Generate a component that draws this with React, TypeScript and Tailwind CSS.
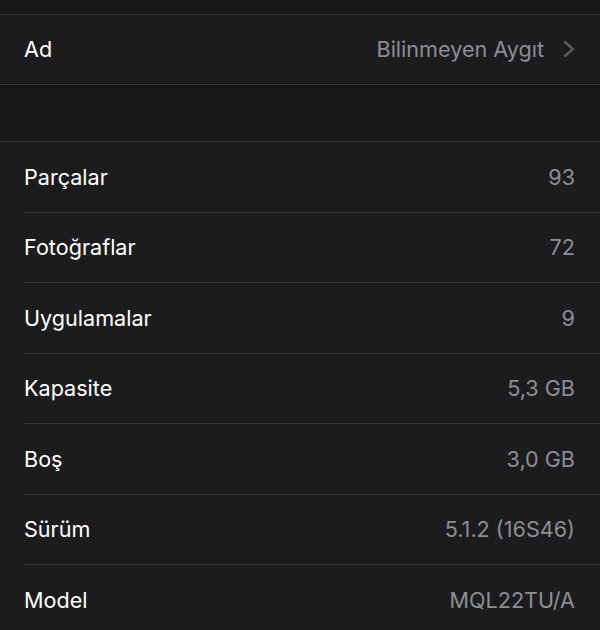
const rows: [string, string][] = [
  ["Parçalar", "93"],
  ["Fotoğraflar", "72"],
  ["Uygulamalar", "9"],
  ["Kapasite", "5,3 GB"],
  ["Boş", "3,0 GB"],
  ["Sürüm", "5.1.2 (16S46)"],
  ["Model", "MQL22TU/A"],
];

export default function App() {
  return (
    <div
      className="h-[630px] w-[600px] overflow-hidden bg-[#171717] text-[21.6px]"
      style={{ fontFamily: "Inter, 'Noto Sans', sans-serif" }}
    >
      <div className="h-[14px]" />
      <div className="border-y border-[#343436] bg-[#1c1c1e]">
        <div className="flex h-[69px] items-center justify-between pl-[24px] pr-[25px]">
          <span className="text-white">Ad</span>
          <div className="flex items-center gap-[19px]">
            <span className="text-[#8e8e93]">Bilinmeyen Aygıt</span>
            <svg width="12" height="18" viewBox="0 0 12 18" fill="none">
              <path d="M2 2l8 7-8 7" stroke="#5c5c60" strokeWidth="2.4" strokeLinecap="round" strokeLinejoin="round" />
            </svg>
          </div>
        </div>
      </div>
      <div className="h-[56px]" />
      <div className="border-t border-[#343436] bg-[#1c1c1e]">
        {rows.map(([label, value], i) => (
          <div key={label} className="pl-[24px]">
            <div
              className={
                "flex h-[70.5px] items-center justify-between pr-[25px] " +
                (i < rows.length - 1 ? "border-b border-[#343436]" : "")
              }
            >
              <span className="text-white">{label}</span>
              <span className="text-[#8e8e93]">{value}</span>
            </div>
          </div>
        ))}
      </div>
    </div>
  );
}
